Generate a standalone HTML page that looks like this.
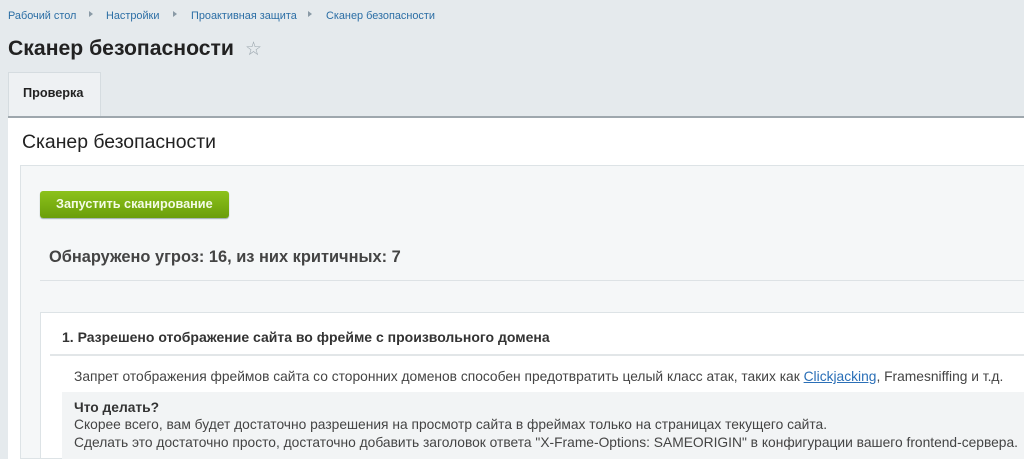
<!DOCTYPE html>
<html><head><meta charset="utf-8"><style>
*{margin:0;padding:0;box-sizing:border-box}
body{width:1024px;height:459px;overflow:hidden;background:#e5eaed;font-family:"Liberation Sans",Arial,sans-serif;position:relative;color:#333}
.a{position:absolute;white-space:nowrap}
.bc{top:10px;font-size:10.9px;color:#2b6ea5}
.arr{top:11px;width:0;height:0;border-left:4px solid #8a9aa6;border-top:3.5px solid transparent;border-bottom:3.5px solid transparent}
</style></head><body>
<div class="a bc" style="left:8px">Рабочий стол</div>
<div class="a arr" style="left:89px"></div>
<div class="a bc" style="left:106px">Настройки</div>
<div class="a arr" style="left:173px"></div>
<div class="a bc" style="left:191px">Проактивная защита</div>
<div class="a arr" style="left:308px"></div>
<div class="a bc" style="left:326px">Сканер безопасности</div>
<div class="a" style="left:8px;top:37px;font-size:21.2px;font-weight:bold;color:#222">Сканер безопасности</div>
<div class="a" style="left:245px;top:38px;font-size:19px;color:#9aa5ad">☆</div>
<div class="a" style="left:8px;top:72px;width:93px;height:44px;background:#eef1f3;border:1px solid #d5dce0;border-bottom:none"></div>
<div class="a" style="left:23px;top:86px;font-size:12.7px;font-weight:bold;color:#222">Проверка</div>
<div class="a" style="left:8px;top:116px;width:1016px;height:343px;background:#fff;border-top:2px solid #9ea7ad"></div>
<div class="a" style="left:22px;top:131px;font-size:19.4px;color:#222">Сканер безопасности</div>
<div class="a" style="left:20px;top:165px;width:1004px;height:294px;background:#f5f7f8;border:1px solid #dde3e6;border-right:none"></div>
<div class="a" style="left:40px;top:191px;width:189px;height:27px;background:linear-gradient(#8cc21b,#6a9e0a);border-radius:3px;box-shadow:0 1px 1px #9aa"></div>
<div class="a" style="left:56px;top:197px;font-size:12.7px;font-weight:bold;color:#f4fbe6">Запустить сканирование</div>
<div class="a" style="left:49px;top:248px;font-size:16.4px;font-weight:bold;color:#444">Обнаружено угроз: 16, из них критичных: 7</div>
<div class="a" style="left:40px;top:280px;width:984px;height:1px;background:#dde2e5"></div>
<div class="a" style="left:40px;top:312px;width:984px;height:147px;background:#fff;border:1px solid #dde3e6;border-right:none"></div>
<div class="a" style="left:62px;top:329px;font-size:14px;font-weight:bold;color:#333">1. Разрешено отображение сайта во фрейме с произвольного домена</div>
<div class="a" style="left:50px;top:354px;width:974px;height:2px;background:#e2e6e8"></div>
<div class="a" style="left:74px;top:369px;font-size:13.8px;color:#444">Запрет отображения фреймов сайта со сторонних доменов способен предотвратить целый класс атак, таких как <span style="color:#2a6fb7;text-decoration:underline">Clickjacking</span>, Framesniffing и т.д.</div>
<div class="a" style="left:62px;top:392px;width:962px;height:67px;background:#f2f4f5"></div>
<div class="a" style="left:74px;top:400px;font-size:13.8px;font-weight:bold;color:#333">Что делать?</div>
<div class="a" style="left:74px;top:417px;font-size:13.8px;color:#444">Скорее всего, вам будет достаточно разрешения на просмотр сайта в фреймах только на страницах текущего сайта.</div>
<div class="a" style="left:74px;top:435px;font-size:13.8px;color:#444">Сделать это достаточно просто, достаточно добавить заголовок ответа "X-Frame-Options: SAMEORIGIN" в конфигурации вашего frontend-сервера.</div>
</body></html>
